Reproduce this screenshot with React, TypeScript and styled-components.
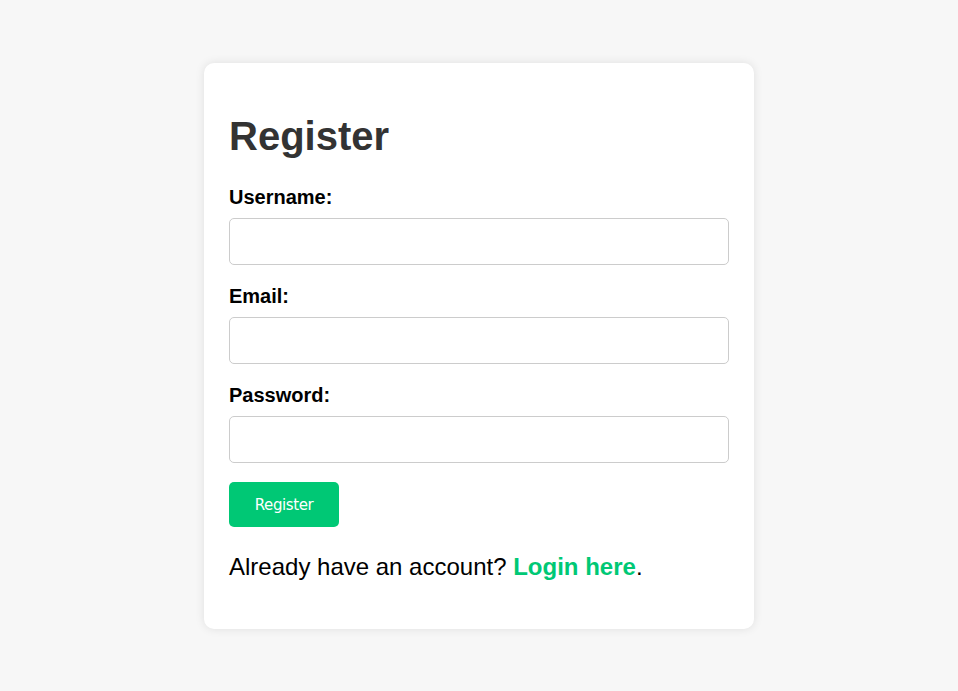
import React from "react";
import styled, { createGlobalStyle } from "styled-components";

const Global = createGlobalStyle`
  html, body { margin: 0; padding: 0; }
  body {
    background: #f7f7f7;
    font-family: "Liberation Sans", Arial, sans-serif;
  }
`;

const Page = styled.div`
  display: flex;
  justify-content: center;
  align-items: flex-start;
  padding-top: 63px;
  min-height: 691px;
  box-sizing: border-box;
`;

const Card = styled.div`
  width: 550px;
  box-sizing: border-box;
  background: #ffffff;
  border-radius: 10px;
  box-shadow: 0 0 10px rgba(0, 0, 0, 0.1);
  padding: 50px 25px 48px;
`;

const Title = styled.h1`
  margin: 0 0 27px;
  font-size: 40px;
  font-weight: bold;
  color: #333333;
  line-height: 46px;
`;

const Form = styled.form`
  display: flex;
  flex-direction: column;
  align-items: flex-start;
`;

const Label = styled.label`
  display: block;
  font-size: 20px;
  font-weight: bold;
  color: #000;
  line-height: 23px;
  margin-bottom: 9px;
`;

const Input = styled.input`
  display: block;
  width: 500px;
  height: 47px;
  box-sizing: border-box;
  border: 1px solid #cccccc;
  border-radius: 5px;
  margin: 0 0 20px;
  padding: 0 10px;
  font-size: 16px;
  font-family: "Liberation Sans", Arial, sans-serif;
  outline: none;
`;

const Button = styled.button`
  width: 110px;
  height: 45px;
  margin-top: -1px;
  border: none;
  border-radius: 5px;
  background: #00c875;
  color: #ffffff;
  font-family: "DejaVu Sans", Verdana, sans-serif;
  font-size: 15px;
  letter-spacing: -0.4px;
  cursor: pointer;
`;

const Footer = styled.p`
  margin: 26px 0 0;
  font-size: 24px;
  line-height: 28px;
  color: #000;
`;

const LoginLink = styled.a`
  color: #00c875;
  font-weight: bold;
  text-decoration: none;
`;

export default function App() {
  return (
    <>
      <Global />
      <Page>
        <Card>
          <Title>Register</Title>
          <Form onSubmit={(e) => e.preventDefault()}>
            <Label htmlFor="username">Username:</Label>
            <Input id="username" type="text" />
            <Label htmlFor="email">Email:</Label>
            <Input id="email" type="email" />
            <Label htmlFor="password">Password:</Label>
            <Input id="password" type="password" />
            <Button type="submit">Register</Button>
          </Form>
          <Footer>
            Already have an account? <LoginLink href="#">Login here</LoginLink>.
          </Footer>
        </Card>
      </Page>
    </>
  );
}
